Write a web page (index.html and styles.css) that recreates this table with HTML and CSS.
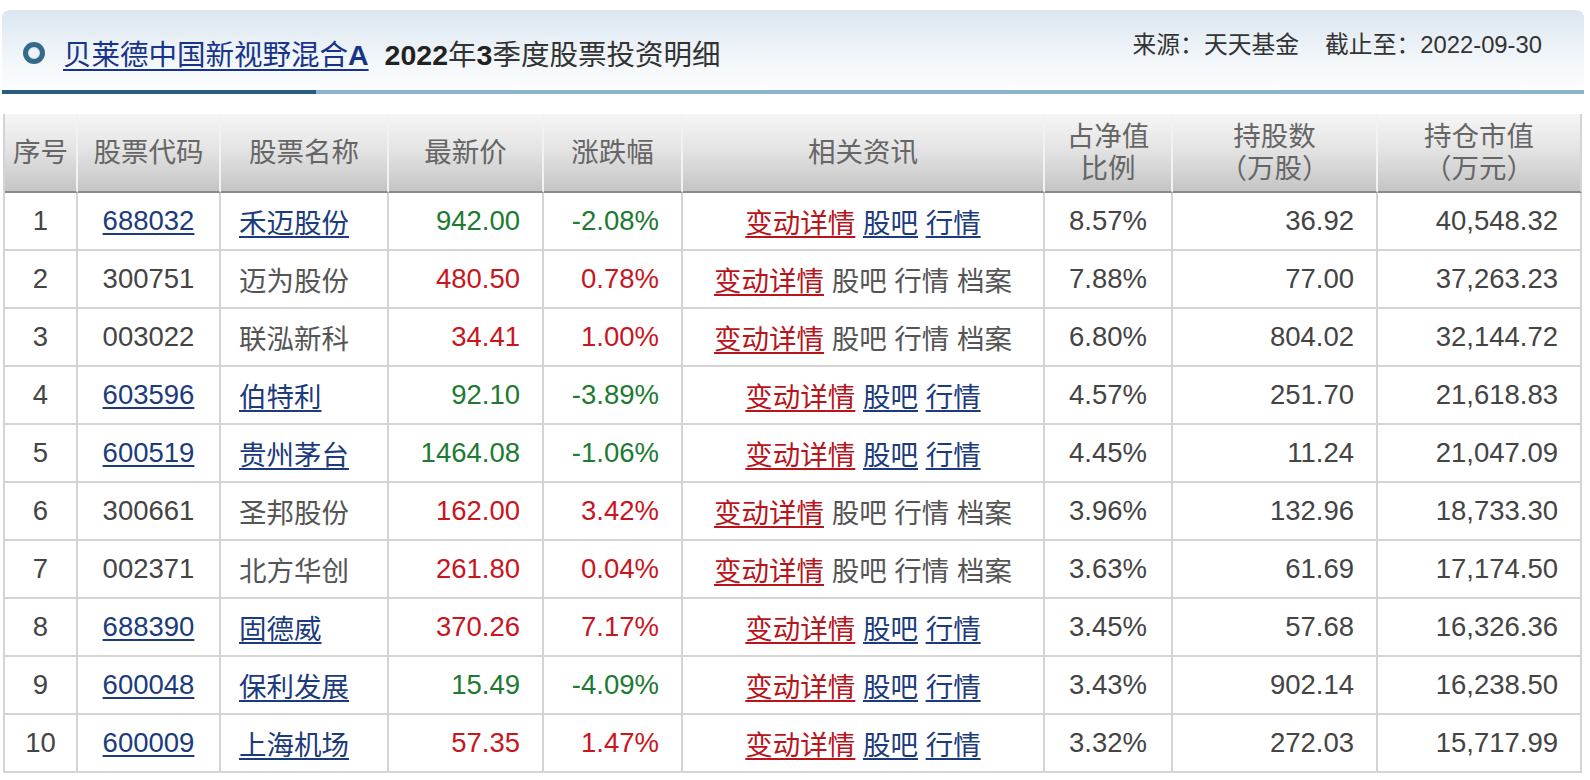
FILE: index.html
```html
<!DOCTYPE html>
<html lang="zh-CN">
<head>
<meta charset="utf-8">
<title>贝莱德中国新视野混合A 2022年3季度股票投资明细</title>
<link rel="stylesheet" href="styles.css">
</head>
<body>
<div class="page">
  <div class="box-head">
    <div class="head-row">
      <div class="title">
        <span class="ring"></span>
        <a class="fund-link" href="#">贝莱德中国新视野混合<b>A</b></a>
        <span class="title-rest"><b>2022</b>年<b>3</b>季度股票投资明细</span>
      </div>
      <div class="source">来源：天天基金<span class="sp"></span>截止至：2022-09-30</div>
    </div>
    <div class="head-line"></div>
  </div>

  <table class="holdings">
    <colgroup>
      <col style="width:73px"><col style="width:143px"><col style="width:168px"><col style="width:155px"><col style="width:139px"><col style="width:362px"><col style="width:128px"><col style="width:205px"><col>
    </colgroup>
    <thead>
      <tr>
        <th>序号</th><th>股票代码</th><th>股票名称</th><th>最新价</th><th>涨跌幅</th><th>相关资讯</th><th>占净值<br>比例</th><th>持股数<br>（万股）</th><th>持仓市值<br>（万元）</th>
      </tr>
    </thead>
    <tbody>
      <tr>
        <td class="c">1</td><td class="code"><a href="#">688032</a></td><td class="name"><a href="#">禾迈股份</a></td>
        <td class="r down">942.00</td><td class="r down">-2.08%</td>
        <td class="c news"><a class="red" href="#">变动详情</a> <a href="#">股吧</a> <a href="#">行情</a></td>
        <td class="c">8.57%</td><td class="r">36.92</td><td class="r">40,548.32</td>
      </tr>
      <tr>
        <td class="c">2</td><td class="code">300751</td><td class="name">迈为股份</td>
        <td class="r up">480.50</td><td class="r up">0.78%</td>
        <td class="c news"><a class="red" href="#">变动详情</a> 股吧 行情 档案</td>
        <td class="c">7.88%</td><td class="r">77.00</td><td class="r">37,263.23</td>
      </tr>
      <tr>
        <td class="c">3</td><td class="code">003022</td><td class="name">联泓新科</td>
        <td class="r up">34.41</td><td class="r up">1.00%</td>
        <td class="c news"><a class="red" href="#">变动详情</a> 股吧 行情 档案</td>
        <td class="c">6.80%</td><td class="r">804.02</td><td class="r">32,144.72</td>
      </tr>
      <tr>
        <td class="c">4</td><td class="code"><a href="#">603596</a></td><td class="name"><a href="#">伯特利</a></td>
        <td class="r down">92.10</td><td class="r down">-3.89%</td>
        <td class="c news"><a class="red" href="#">变动详情</a> <a href="#">股吧</a> <a href="#">行情</a></td>
        <td class="c">4.57%</td><td class="r">251.70</td><td class="r">21,618.83</td>
      </tr>
      <tr>
        <td class="c">5</td><td class="code"><a href="#">600519</a></td><td class="name"><a href="#">贵州茅台</a></td>
        <td class="r down">1464.08</td><td class="r down">-1.06%</td>
        <td class="c news"><a class="red" href="#">变动详情</a> <a href="#">股吧</a> <a href="#">行情</a></td>
        <td class="c">4.45%</td><td class="r">11.24</td><td class="r">21,047.09</td>
      </tr>
      <tr>
        <td class="c">6</td><td class="code">300661</td><td class="name">圣邦股份</td>
        <td class="r up">162.00</td><td class="r up">3.42%</td>
        <td class="c news"><a class="red" href="#">变动详情</a> 股吧 行情 档案</td>
        <td class="c">3.96%</td><td class="r">132.96</td><td class="r">18,733.30</td>
      </tr>
      <tr>
        <td class="c">7</td><td class="code">002371</td><td class="name">北方华创</td>
        <td class="r up">261.80</td><td class="r up">0.04%</td>
        <td class="c news"><a class="red" href="#">变动详情</a> 股吧 行情 档案</td>
        <td class="c">3.63%</td><td class="r">61.69</td><td class="r">17,174.50</td>
      </tr>
      <tr>
        <td class="c">8</td><td class="code"><a href="#">688390</a></td><td class="name"><a href="#">固德威</a></td>
        <td class="r up">370.26</td><td class="r up">7.17%</td>
        <td class="c news"><a class="red" href="#">变动详情</a> <a href="#">股吧</a> <a href="#">行情</a></td>
        <td class="c">3.45%</td><td class="r">57.68</td><td class="r">16,326.36</td>
      </tr>
      <tr>
        <td class="c">9</td><td class="code"><a href="#">600048</a></td><td class="name"><a href="#">保利发展</a></td>
        <td class="r down">15.49</td><td class="r down">-4.09%</td>
        <td class="c news"><a class="red" href="#">变动详情</a> <a href="#">股吧</a> <a href="#">行情</a></td>
        <td class="c">3.43%</td><td class="r">902.14</td><td class="r">16,238.50</td>
      </tr>
      <tr>
        <td class="c">10</td><td class="code"><a href="#">600009</a></td><td class="name"><a href="#">上海机场</a></td>
        <td class="r up">57.35</td><td class="r up">1.47%</td>
        <td class="c news"><a class="red" href="#">变动详情</a> <a href="#">股吧</a> <a href="#">行情</a></td>
        <td class="c">3.32%</td><td class="r">272.03</td><td class="r">15,717.99</td>
      </tr>
    </tbody>
  </table>
</div>
</body>
</html>
```

FILE: styles.css
```css
html, body {
  margin: 0;
  padding: 0;
  background: #ffffff;
}

body {
  font-family: "Liberation Sans", "Noto Sans CJK SC", sans-serif;
  color: #333;
}

.page {
  padding: 10px 6px 0 2px;
}

.box-head {
  width: 1582px;
  border-radius: 8px 8px 0 0;
  background: linear-gradient(to bottom, #dae6ef 0%, #e9f0f6 35%, #f7fafc 75%, #fbfdfe 100%);
}

.head-row {
  height: 80px;
  display: flex;
  justify-content: space-between;
  align-items: flex-start;
  padding: 0 42px 0 21px;
}

.title {
  display: flex;
  align-items: center;
  height: 80px;
  padding-top: 5px;
  box-sizing: border-box;
  font-size: 28.5px;
}

.ring {
  width: 22px;
  height: 22px;
  box-sizing: border-box;
  border-radius: 50%;
  border: 5px solid #336a8b;
  box-shadow: inset 0 0 2px rgba(0, 0, 0, 0.25);
  margin-right: 18px;
  flex: none;
}

.fund-link {
  color: #17348a;
  text-decoration: underline;
  text-underline-offset: 4px;
}

.fund-link b {
  font-weight: bold;
}

.title-rest {
  color: #333;
  margin-left: 16px;
}

.title-rest b {
  color: #222;
  font-weight: bold;
}

.source {
  padding-top: 15px;
  font-size: 23.8px;
  color: #333;
}

.source .sp {
  display: inline-block;
  width: 26px;
}

.head-line {
  height: 4px;
  background: linear-gradient(to right, #275e80 0, #275e80 314px, #8cb3ce 314px, #8cb3ce 100%);
}

.holdings {
  margin-top: 20px;
  margin-left: 1px;
  width: 1579px;
  table-layout: fixed;
  border-collapse: separate;
  border-spacing: 0;
  border-left: 2px solid #d4d4d4;
  font-size: 27.5px;
}

.holdings th {
  height: 77px;
  padding: 0;
  font-weight: normal;
  color: #666;
  line-height: 32px;
  background: linear-gradient(to bottom, #f6f6f6 0%, #e4e4e4 45%, #c5c5c5 100%);
  border-right: 2px solid #f2f2f2;
  border-bottom: 2px solid #8a8a8a;
  text-align: center;
  vertical-align: middle;
}

.holdings th:last-child {
  border-right: 2px solid #d4d4d4;
}

.holdings td {
  height: 56px;
  padding: 0 22px;
  border-right: 2px solid #d4d4d4;
  border-bottom: 2px solid #d4d4d4;
  color: #444;
  white-space: nowrap;
  vertical-align: middle;
}

.holdings td.c {
  text-align: center;
  padding: 0;
}

.holdings td.r {
  text-align: right;
}

.holdings td.code {
  text-align: center;
  padding: 0;
}

.holdings td.name {
  text-align: left;
  padding-left: 18px;
  color: #555;
}

.holdings td.news {
  color: #555;
}

.holdings a {
  color: #1b3b7c;
  text-decoration: underline;
  text-underline-offset: 3px;
}

.holdings a.red {
  color: #b8141b;
}

.holdings td.up {
  color: #c8161e;
}

.holdings td.down {
  color: #1e7a32;
}
```
